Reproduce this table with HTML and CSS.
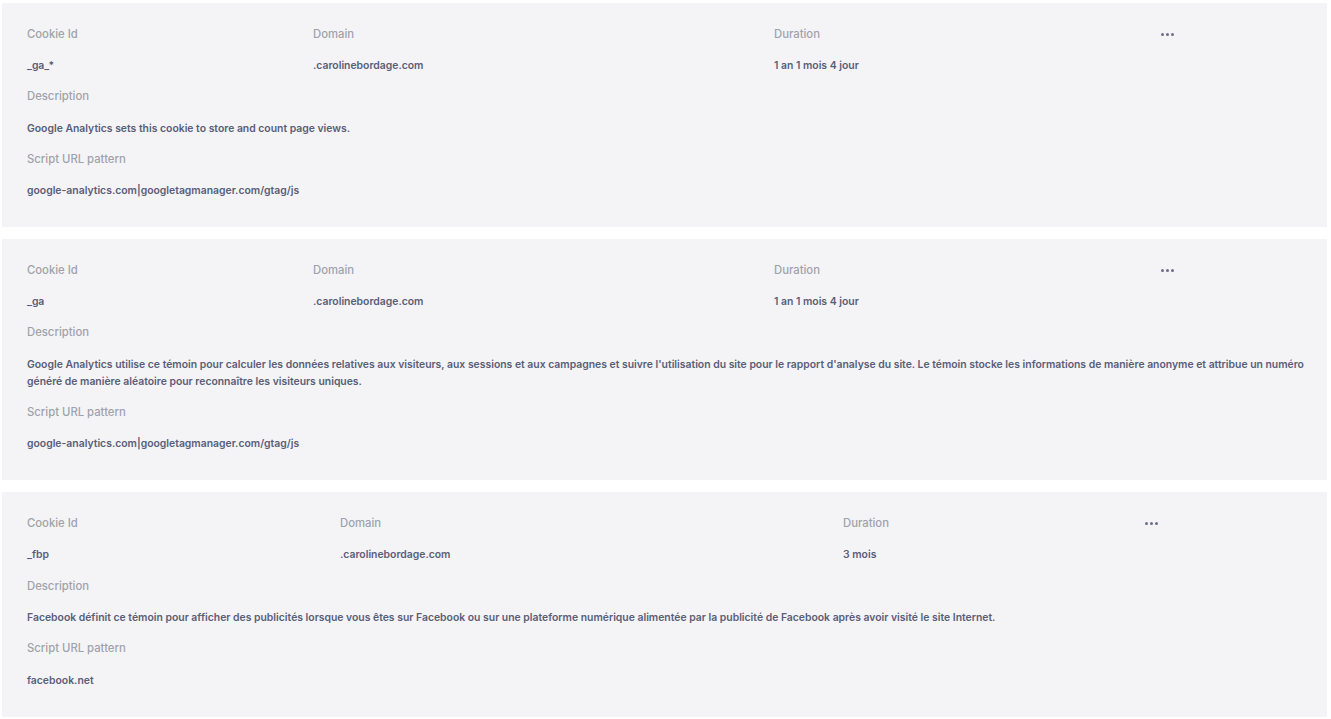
FILE: index.html
```html
<!DOCTYPE html>
<html lang="en">
<head>
    <meta charset="UTF-8">
    <meta name="viewport" content="width=device-width, initial-scale=1.0">
    <title>Cookie list</title>
    <link rel="stylesheet" href="styles.css">
</head>
<body>
<div class="cookie-list">
    <!-- _ga_* -->
    <div class="cookie-card">
        <div class="cookie-head">
            <span class="label">Cookie Id</span>
            <span class="label">Domain</span>
            <span class="label">Duration</span>
            <span class="dots"><i></i><i></i><i></i></span>
            <span class="value">_ga_*</span>
            <span class="value">.carolinebordage.com</span>
            <span class="value">1 an 1 mois 4 jour</span>
            <span></span>
        </div>
        <div class="label">Description</div>
        <div class="value">Google Analytics sets this cookie to store and count page views.</div>
        <div class="label">Script URL pattern</div>
        <div class="value">google-analytics.com|googletagmanager.com/gtag/js</div>
    </div>

    <!-- _ga -->
    <div class="cookie-card">
        <div class="cookie-head">
            <span class="label">Cookie Id</span>
            <span class="label">Domain</span>
            <span class="label">Duration</span>
            <span class="dots"><i></i><i></i><i></i></span>
            <span class="value">_ga</span>
            <span class="value">.carolinebordage.com</span>
            <span class="value">1 an 1 mois 4 jour</span>
            <span></span>
        </div>
        <div class="label">Description</div>
        <div class="value">Google Analytics utilise ce témoin pour calculer les données relatives aux visiteurs, aux sessions et aux campagnes et suivre l'utilisation du site pour le rapport d'analyse du site. Le témoin stocke les informations de manière anonyme et attribue un numéro généré de manière aléatoire pour reconnaître les visiteurs uniques.</div>
        <div class="label">Script URL pattern</div>
        <div class="value">google-analytics.com|googletagmanager.com/gtag/js</div>
    </div>

    <!-- _fbp -->
    <div class="cookie-card">
        <div class="cookie-head cookie-head--wide">
            <span class="label">Cookie Id</span>
            <span class="label">Domain</span>
            <span class="label">Duration</span>
            <span class="dots"><i></i><i></i><i></i></span>
            <span class="value">_fbp</span>
            <span class="value">.carolinebordage.com</span>
            <span class="value">3 mois</span>
            <span></span>
        </div>
        <div class="label">Description</div>
        <div class="value">Facebook définit ce témoin pour afficher des publicités lorsque vous êtes sur Facebook ou sur une plateforme numérique alimentée par la publicité de Facebook après avoir visité le site Internet.</div>
        <div class="label">Script URL pattern</div>
        <div class="value">facebook.net</div>
    </div>
</div>
</body>
</html>
```

FILE: styles.css
```css
body {
    margin: 0;
    background: #fff;
    font-family: Inter, "Noto Sans", sans-serif;
    font-size: 10.4px;
}

.cookie-list {
    display: flex;
    flex-direction: column;
    gap: 12px;
    padding: 3px 4px 3px 2px;
}

.cookie-card {
    background: #f4f4f6;
    padding: 23px 22px 28px 25px;
    display: flex;
    flex-direction: column;
    gap: 14.3px;
}

.cookie-head {
    display: grid;
    grid-template-columns: 286px 461px 387px 1fr;
    row-gap: 14px;
}

.cookie-head--wide {
    grid-template-columns: 313px 503px 302px 1fr;
}

.label {
    line-height: 17px;
    color: #9fa2ac;
    font-weight: 500;
    font-size: 11.3px;
}

.value {
    line-height: 17px;
    color: #5a5e79;
    font-weight: 600;
}

.dots {
    display: flex;
    align-items: center;
    gap: 2px;
    height: 17px;
}

.dots i {
    width: 3px;
    height: 3px;
    border-radius: 50%;
    background: #6a6e8a;
}
```
